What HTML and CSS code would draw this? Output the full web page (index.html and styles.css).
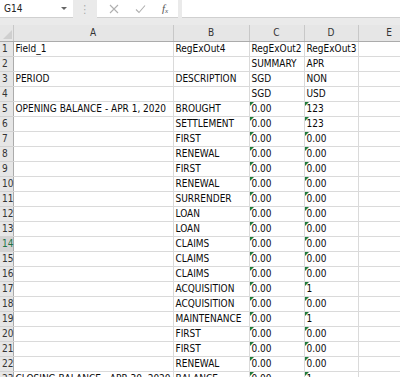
FILE: index.html
```html
<!DOCTYPE html>
<html>
<head>
<meta charset="utf-8">
<link rel="stylesheet" href="styles.css">
</head>
<body>
<div class="app">
  <div class="fbar">
    <div class="namebox"><span class="cellref">G14</span><span class="caret"></span></div>
    <div class="dots">⋮</div>
    <div class="fbtns">
      <svg class="ic" width="10" height="10" viewBox="0 0 10 10"><path d="M1 1L9 9M9 1L1 9" stroke="#b0b0b0" stroke-width="1.1" fill="none"/></svg>
      <svg class="ic" width="11" height="10" viewBox="0 0 11 10"><path d="M1 5.5L4 8.5L10 1.5" stroke="#b0b0b0" stroke-width="1.1" fill="none"/></svg>
      <span class="fx">f<sub>x</sub></span>
    </div>
    <div class="finput"></div>
  </div>
  <table class="sheet">
    <colgroup>
      <col class="c-rh"><col class="c-a"><col class="c-b"><col class="c-c"><col class="c-d"><col class="c-e">
    </colgroup>
    <thead>
      <tr class="hdr">
        <th class="corner"><span class="tri"></span></th><th>A</th><th>B</th><th>C</th><th>D</th><th>E</th>
      </tr>
    </thead>
    <tbody id="body">
      <tr><th>1</th><td>Field_1</td><td>RegExOut4</td><td>RegExOut2</td><td>RegExOut3</td><td></td></tr>
      <tr><th>2</th><td></td><td></td><td>SUMMARY</td><td>APR</td><td></td></tr>
      <tr><th>3</th><td>PERIOD</td><td>DESCRIPTION</td><td>SGD</td><td>NON</td><td></td></tr>
      <tr><th>4</th><td></td><td></td><td>SGD</td><td>USD</td><td></td></tr>
      <tr><th>5</th><td>OPENING BALANCE - APR 1, 2020</td><td>BROUGHT</td><td class="t">0.00</td><td class="t">123</td><td></td></tr>
      <tr><th>6</th><td></td><td>SETTLEMENT</td><td class="t">0.00</td><td class="t">123</td><td></td></tr>
      <tr><th>7</th><td></td><td>FIRST</td><td class="t">0.00</td><td class="t">0.00</td><td></td></tr>
      <tr><th>8</th><td></td><td>RENEWAL</td><td class="t">0.00</td><td class="t">0.00</td><td></td></tr>
      <tr><th>9</th><td></td><td>FIRST</td><td class="t">0.00</td><td class="t">0.00</td><td></td></tr>
      <tr><th>10</th><td></td><td>RENEWAL</td><td class="t">0.00</td><td class="t">0.00</td><td></td></tr>
      <tr><th>11</th><td></td><td>SURRENDER</td><td class="t">0.00</td><td class="t">0.00</td><td></td></tr>
      <tr><th>12</th><td></td><td>LOAN</td><td class="t">0.00</td><td class="t">0.00</td><td></td></tr>
      <tr><th>13</th><td></td><td>LOAN</td><td class="t">0.00</td><td class="t">0.00</td><td></td></tr>
      <tr><th class="sel">14</th><td></td><td>CLAIMS</td><td class="t">0.00</td><td class="t">0.00</td><td></td></tr>
      <tr><th>15</th><td></td><td>CLAIMS</td><td class="t">0.00</td><td class="t">0.00</td><td></td></tr>
      <tr><th>16</th><td></td><td>CLAIMS</td><td class="t">0.00</td><td class="t">0.00</td><td></td></tr>
      <tr><th>17</th><td></td><td>ACQUISITION</td><td class="t">0.00</td><td class="t">1</td><td></td></tr>
      <tr><th>18</th><td></td><td>ACQUISITION</td><td class="t">0.00</td><td class="t">0.00</td><td></td></tr>
      <tr><th>19</th><td></td><td>MAINTENANCE</td><td class="t">0.00</td><td class="t">1</td><td></td></tr>
      <tr><th>20</th><td></td><td>FIRST</td><td class="t">0.00</td><td class="t">0.00</td><td></td></tr>
      <tr><th>21</th><td></td><td>FIRST</td><td class="t">0.00</td><td class="t">0.00</td><td></td></tr>
      <tr><th>22</th><td></td><td>RENEWAL</td><td class="t">0.00</td><td class="t">0.00</td><td></td></tr>
      <tr><th>23</th><td>CLOSING BALANCE - APR 30, 2020</td><td>BALANCE</td><td class="t">0.00</td><td class="t">1</td><td></td></tr>
    </tbody>
  </table>
</div>
</body>
</html>
```
FILE: styles.css
```css
html, body {
  margin: 0;
  padding: 0;
  background: #ffffff;
  overflow: hidden;
}
.app {
  width: 400px;
  height: 377px;
  overflow: hidden;
  background: #eaeaea;
  font-family: "DejaVu Sans Condensed", "DejaVu Sans", sans-serif;
  font-stretch: condensed;
  color: #111;
}
.fbar {
  display: flex;
  height: 18px;
  align-items: stretch;
  margin-bottom: 7px;
}
.namebox {
  width: 73px;
  background: #fff;
  border-bottom: 1px solid #d0d0d0;
  display: flex;
  align-items: center;
  justify-content: space-between;
  padding: 0 4px 0 4px;
  box-sizing: border-box;
  font-size: 10px;
  color: #222;
}
.caret {
  width: 0;
  height: 0;
  border-left: 3px solid transparent;
  border-right: 3px solid transparent;
  border-top: 3px solid #666;
  margin-right: 2px;
}
.dots {
  width: 24px;
  display: flex;
  align-items: center;
  justify-content: center;
  color: #a8a8a8;
  font-size: 11px;
}
.fbtns {
  width: 81px;
  background: #fff;
  border-bottom: 1px solid #d0d0d0;
  display: flex;
  align-items: center;
  gap: 16px;
  padding-left: 12px;
  box-sizing: border-box;
}
.fx {
  font-family: "Liberation Serif", serif;
  font-style: italic;
  font-size: 11px;
  color: #555;
}
.fx sub {
  font-size: 7px;
  vertical-align: -1px;
}
.finput {
  flex: 1;
  margin-left: 4px;
  background: #fff;
  border-bottom: 1px solid #d0d0d0;
}
.sheet {
  border-collapse: collapse;
  table-layout: fixed;
  width: 420px;
  background: #fff;
  font-size: 10px;
}
.c-rh { width: 13px; }
.c-a { width: 160px; }
.c-b { width: 76px; }
.c-c { width: 55px; }
.c-d { width: 54px; }
.c-e { width: 62px; }
.sheet th, .sheet td {
  height: 15px;
  padding: 0 0 0 2px;
  box-sizing: border-box;
  white-space: nowrap;
  overflow: visible;
  line-height: 14px;
  font-weight: normal;
  text-align: left;
}
.sheet td {
  border-right: 1px solid #dadada;
  border-bottom: 1px solid #dadada;
  color: #0a0a0a;
  position: relative;
}
.hdr th {
  background: #e6e6e6;
  text-align: center;
  color: #333;
  border-right: 1px solid #c8c8c8;
  border-bottom: 1px solid #ababab;
  height: 16px;
  padding: 0;
}
.hdr th.corner {
  position: relative;
  border-right: 1px solid #c8c8c8;
}
.tri {
  position: absolute;
  right: 1px;
  bottom: 2px;
  width: 0;
  height: 0;
  border-left: 9px solid transparent;
  border-bottom: 9px solid #cfcfcf;
}
tbody th {
  background: #e6e6e6;
  color: #333;
  border-bottom: 1px solid #d2d2d2;
  border-right: 1px solid #ababab;
  padding: 0 0 0 1px;
  overflow: visible;
}
tbody th.sel {
  background: #d3d3d3;
  color: #217346;
}
td.t::before {
  content: "";
  position: absolute;
  left: 0;
  top: 0;
  width: 0;
  height: 0;
  border-top: 4px solid #1f7a3a;
  border-right: 4px solid transparent;
}
```
